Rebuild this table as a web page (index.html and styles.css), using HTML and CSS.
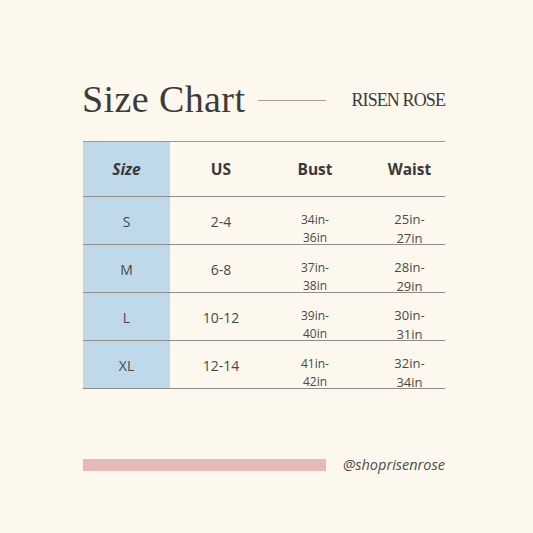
FILE: index.html
```html
<!DOCTYPE html>
<html>
<head>
<meta charset="utf-8">
<link rel="stylesheet" href="styles.css">
</head>
<body>
<div class="page">
  <header class="top">
    <h1 class="title">Size Chart</h1>
    <span class="rule"></span>
    <span class="brand">RISEN ROSE</span>
  </header>
  <div class="chart">
    <div class="row head">
      <div class="cell size"><em>Size</em></div>
      <div class="cell">US</div>
      <div class="cell">Bust</div>
      <div class="cell waist">Waist</div>
    </div>
    <div class="row">
      <div class="cell size">S</div>
      <div class="cell">2-4</div>
      <div class="cell"><div class="two">34in-<br>36in</div></div>
      <div class="cell waist"><div class="two big">25in-<br>27in</div></div>
    </div>
    <div class="row">
      <div class="cell size">M</div>
      <div class="cell">6-8</div>
      <div class="cell"><div class="two">37in-<br>38in</div></div>
      <div class="cell waist"><div class="two big">28in-<br>29in</div></div>
    </div>
    <div class="row">
      <div class="cell size">L</div>
      <div class="cell">10-12</div>
      <div class="cell"><div class="two">39in-<br>40in</div></div>
      <div class="cell waist"><div class="two big">30in-<br>31in</div></div>
    </div>
    <div class="row">
      <div class="cell size">XL</div>
      <div class="cell">12-14</div>
      <div class="cell"><div class="two">41in-<br>42in</div></div>
      <div class="cell waist"><div class="two big">32in-<br>34in</div></div>
    </div>
  </div>
  <footer class="bottom">
    <span class="bar"></span>
    <span class="handle">@shoprisenrose</span>
  </footer>
</div>
</body>
</html>
```

FILE: styles.css
```css
html, body {
  margin: 0;
  padding: 0;
  background: #fdf8ed;
}
.page {
  width: 533px;
  height: 533px;
  box-sizing: border-box;
  padding: 78px 88px 0 82px;
  font-family: "Open Sans", sans-serif;
  color: #3b3a39;
}
.top {
  display: flex;
  align-items: center;
  height: 42px;
}
.title {
  margin: 0;
  font-family: "Liberation Serif", serif;
  font-weight: normal;
  font-size: 38px;
  letter-spacing: 0.4px;
  color: #3d3b39;
  line-height: 42px;
}
.rule {
  width: 68px;
  height: 1px;
  background: #a69d94;
  margin-left: 13px;
  margin-top: 3px;
}
.brand {
  margin-left: auto;
  font-family: "Liberation Serif", serif;
  font-size: 18px;
  letter-spacing: -0.9px;
  color: #3d3b39;
  margin-top: 2px;
}
.chart {
  margin-top: 21px;
  margin-left: 1px;
  width: 362px;
  border-top: 1px solid #9a9792;
}
.row {
  display: grid;
  grid-template-columns: 87px 102px 86px 87px;
  height: 47px;
  border-bottom: 1px solid #8f8c88;
}
.row.head {
  height: 54px;
}
.cell {
  display: flex;
  align-items: center;
  justify-content: center;
  font-size: 14px;
  color: #4a4846;
  padding-top: 2px;
}
.head .cell {
  font-size: 15.5px;
  font-weight: bold;
  color: #3a3938;
  padding-top: 0;
}
.size {
  background: #bfd9eb;
}
.waist {
  padding-left: 16px;
}
.two {
  height: 18px;
  line-height: 18px;
  font-size: 12px;
  text-align: center;
  overflow: visible;
  transform: translateY(-2px);
}
.two.big {
  font-size: 13px;
  line-height: 19px;
  transform: translateY(-3px);
}
.bottom {
  display: flex;
  align-items: center;
  margin-top: 66px;
  margin-left: 1px;
  width: 362px;
}
.bar {
  width: 243px;
  height: 12px;
  background: #e7b9b7;
}
.handle {
  margin-left: auto;
  font-style: italic;
  font-size: 14.5px;
  color: #4e4c4a;
}
```
